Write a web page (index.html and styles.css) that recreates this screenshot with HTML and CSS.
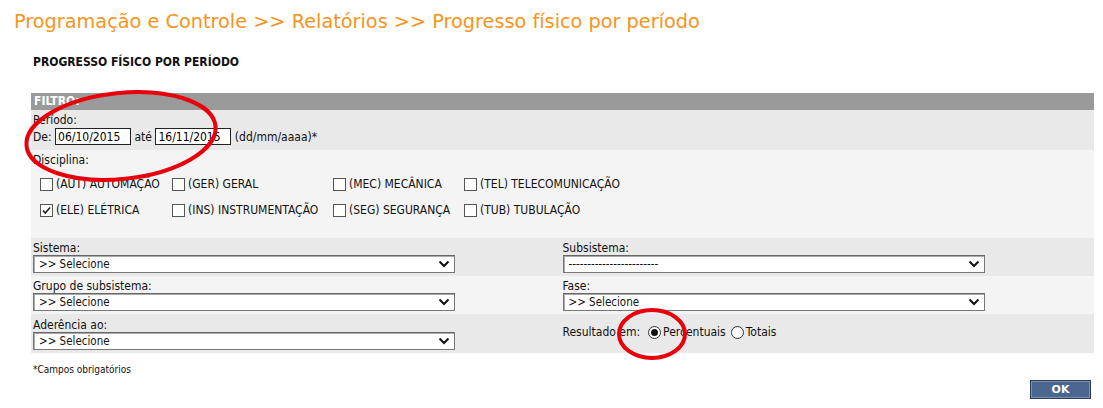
FILE: index.html
```html
<!DOCTYPE html>
<html lang="pt-BR">
<head>
    <meta charset="UTF-8">
    <title>Progresso físico por período</title>
    <link rel="stylesheet" href="styles.css">
</head>
<body>
    <h1 class="breadcrumb">Programação e Controle &gt;&gt; Relatórios &gt;&gt; Progresso físico por período</h1>
    <h2 class="page-title">PROGRESSO FÍSICO POR PERÍODO</h2>

    <div class="filter">
        <div class="filter-head">FILTRO:</div>

        <div class="row dark periodo">
            <div>Período:</div>
            <div class="dates">De: <input type="text" class="date" value="06/10/2015"> até <input type="text" class="date" value="16/11/2015"> (dd/mm/aaaa)*</div>
        </div>

        <div class="row light disciplina">
            <div>Disciplina:</div>
            <div class="checks">
                <label><span class="box"></span>(AUT) AUTOMAÇÃO</label>
                <label><span class="box"></span>(GER) GERAL</label>
                <label><span class="box"></span>(MEC) MECÂNICA</label>
                <label><span class="box"></span>(TEL) TELECOMUNICAÇÃO</label>
                <label><span class="box checked"><svg width="11" height="11" viewBox="0 0 11 11"><path d="M2 5.5 L4.3 8 L9 2.5" fill="none" stroke="#222" stroke-width="1.6"/></svg></span>(ELE) ELÉTRICA</label>
                <label><span class="box"></span>(INS) INSTRUMENTAÇÃO</label>
                <label><span class="box"></span>(SEG) SEGURANÇA</label>
                <label><span class="box"></span>(TUB) TUBULAÇÃO</label>
            </div>
        </div>

        <div class="row dark split">
            <div class="col">
                <div>Sistema:</div>
                <div class="select"><span>&gt;&gt; Selecione</span><svg width="12" height="8" viewBox="0 0 12 8"><path d="M1.5 1.5 L6 6 L10.5 1.5" fill="none" stroke="#111" stroke-width="2"/></svg></div>
            </div>
            <div class="col">
                <div>Subsistema:</div>
                <div class="select"><span>------------------------</span><svg width="12" height="8" viewBox="0 0 12 8"><path d="M1.5 1.5 L6 6 L10.5 1.5" fill="none" stroke="#111" stroke-width="2"/></svg></div>
            </div>
        </div>

        <div class="row light split">
            <div class="col">
                <div>Grupo de subsistema:</div>
                <div class="select"><span>&gt;&gt; Selecione</span><svg width="12" height="8" viewBox="0 0 12 8"><path d="M1.5 1.5 L6 6 L10.5 1.5" fill="none" stroke="#111" stroke-width="2"/></svg></div>
            </div>
            <div class="col">
                <div>Fase:</div>
                <div class="select"><span>&gt;&gt; Selecione</span><svg width="12" height="8" viewBox="0 0 12 8"><path d="M1.5 1.5 L6 6 L10.5 1.5" fill="none" stroke="#111" stroke-width="2"/></svg></div>
            </div>
        </div>

        <div class="row dark split last">
            <div class="col">
                <div>Aderência ao:</div>
                <div class="select"><span>&gt;&gt; Selecione</span><svg width="12" height="8" viewBox="0 0 12 8"><path d="M1.5 1.5 L6 6 L10.5 1.5" fill="none" stroke="#111" stroke-width="2"/></svg></div>
            </div>
            <div class="col result">
                Resultado em:
                <span class="radio on first"></span>Percentuais
                <span class="radio"></span>Totais
            </div>
        </div>
    </div>

    <p class="note">*Campos obrigatórios</p>

    <div class="actions">
        <button type="button" class="ok">OK</button>
    </div>

    <!-- marcações vermelhas por cima da captura -->
    <svg class="mark mark-period" width="210" height="108" viewBox="0 0 210 108">
        <ellipse cx="101" cy="52" rx="95" ry="43" transform="rotate(-6 101 52)" fill="none" stroke="#e8000b" stroke-width="4"/>
    </svg>
    <svg class="mark mark-radio" width="76" height="56" viewBox="0 0 76 56">
        <ellipse cx="38" cy="28" rx="33" ry="24" fill="none" stroke="#e8000b" stroke-width="4"/>
    </svg>
</body>
</html>
```

FILE: styles.css
```css
body {
    margin: 0;
    font-family: "DejaVu Sans Condensed", "DejaVu Sans", sans-serif;
    font-size: 12px;
    color: #111;
    background: #fff;
    position: relative;
    height: 408px;
}

.breadcrumb {
    margin: 0;
    padding: 10px 0 0 14px;
    font-family: "DejaVu Sans", sans-serif;
    font-size: 19.3px;
    font-weight: normal;
    color: #f7941d;
}

.page-title {
    margin: 22px 0 0 33px;
    font-size: 12px;
    font-weight: bold;
}

.filter {
    margin: 24px 9px 0 31px;
}

.filter-head {
    height: 17px;
    line-height: 17px;
    padding-left: 3px;
    background-color: #9a9a9a;
    color: #fff;
    font-weight: bold;
}

.row {
    padding: 0 2px;
}

.dark {
    background-color: #e9e9e9;
}

.light {
    background-color: #f4f4f4;
}

.periodo {
    height: 40px;
    padding-top: 3px;
    box-sizing: border-box;
}

.dates {
    margin-top: 1px;
}

.date {
    width: 76px;
    height: 17px;
    box-sizing: border-box;
    border: 1px solid #222;
    padding: 0 2px;
    font: inherit;
    font-size: 12px;
    margin: 0;
}

.disciplina {
    height: 88px;
    padding-top: 3px;
    box-sizing: border-box;
}

.checks {
    display: grid;
    grid-template-columns: 132px 161px 131px auto;
    grid-auto-rows: 26px;
    margin: 4px 0 0 7px;
}

.checks label {
    display: flex;
    align-items: center;
    gap: 3px;
}

.box {
    width: 13px;
    height: 13px;
    box-sizing: border-box;
    border: 1px solid #555;
    background: #fff;
    display: inline-flex;
    align-items: center;
    justify-content: center;
}

.split {
    display: flex;
    height: 38px;
    padding-top: 3px;
    box-sizing: border-box;
}

.split.last {
    height: 39px;
    padding-top: 4px;
}

.col {
    width: 532px;
}

.select {
    width: 422px;
    height: 18px;
    box-sizing: border-box;
    border: 1px solid #777;
    border-top-color: #666;
    box-shadow: inset 1px 1px 0 #aaa;
    background: #fff;
    display: flex;
    align-items: center;
    justify-content: space-between;
    padding: 0 4px 0 5px;
    font-size: 11.5px;
}

.result {
    display: flex;
    align-items: center;
    gap: 2px;
    padding-top: 7px;
    align-self: flex-start;
}

.radio {
    width: 13px;
    height: 13px;
    box-sizing: border-box;
    border: 1px solid #333;
    border-radius: 50%;
    background: #fff;
    margin-left: 3px;
    position: relative;
}

.radio.first {
    margin-left: 6px;
}

.radio.on::after {
    content: "";
    position: absolute;
    left: 2px;
    top: 2px;
    width: 7px;
    height: 7px;
    border-radius: 50%;
    background: #111;
}

.note {
    margin: 11px 0 0 33px;
    font-size: 10px;
}

.actions {
    display: flex;
    justify-content: flex-end;
    padding-right: 12px;
    margin-top: 5px;
}

.ok {
    width: 61px;
    height: 19px;
    border: 1px solid #2b3c58;
    box-shadow: inset 0 0 0 1px #7c90b0;
    background-color: #4b668f;
    color: #fff;
    font-family: "DejaVu Sans", sans-serif;
    font-weight: bold;
    font-size: 11px;
    padding: 0;
}

.mark {
    position: absolute;
}

.mark-period {
    left: 20px;
    top: 84px;
}

.mark-radio {
    left: 614px;
    top: 306px;
}
```
